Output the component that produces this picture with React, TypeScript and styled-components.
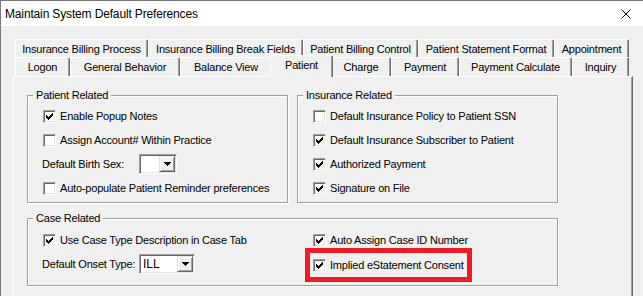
import React from "react";
import styled, { createGlobalStyle } from "styled-components";

const GlobalStyle = createGlobalStyle`
  html, body {
    margin: 0;
    padding: 0;
    background: #f0f0f0;
  }
  body {
    font-family: "Liberation Sans", Arial, sans-serif;
    color: #000;
  }
`;

const CHECK = ["......#", ".....##", "#...###", "##.###.", "#####..", ".###...", "..#...."];
const ARROW = ["#######", ".#####.", "..###..", "...#..."];

const Pixels = ({ rows }: { rows: string[] }) => (
  <svg width={rows[0].length} height={rows.length} shapeRendering="crispEdges">
    {rows.flatMap((r, y) =>
      r.split("").map((c, x) =>
        c === "#" ? <rect key={`${x}-${y}`} x={x} y={y} width={1} height={1} fill="#000" /> : null
      )
    )}
  </svg>
);

const TABS_BACK = [
  { label: "Insurance Billing Process", w: 133 },
  { label: "Insurance Billing Break Fields", w: 155 },
  { label: "Patient Billing Control", w: 115 },
  { label: "Patient Statement Format", w: 136 },
  { label: "Appointment", w: 75 },
];

const TABS_FRONT = [
  { label: "Logon", w: 55 },
  { label: "General Behavior", w: 110 },
  { label: "Balance View", w: 92 },
  { label: "Patient", w: 59, active: true },
  { label: "Charge", w: 60 },
  { label: "Payment", w: 68 },
  { label: "Payment Calculate", w: 113 },
  { label: "Inquiry", w: 57 },
];

const CheckBox = ({ checked }: { checked?: boolean }) => (
  <Box>{checked && <Pixels rows={CHECK} />}</Box>
);

const Combo = ({ value, width }: { value?: string; width: number }) => (
  <ComboBox $width={width}>
    <ComboValue>{value}</ComboValue>
    <ComboButton>
      <Pixels rows={ARROW} />
    </ComboButton>
  </ComboBox>
);

const Check = ({ label, checked }: { label: string; checked?: boolean }) => (
  <Row>
    <CheckBox checked={checked} />
    <Text>{label}</Text>
  </Row>
);

export default function App() {
  return (
    <>
      <GlobalStyle />
      <Window>
        <TitleBar>
          <Title>Maintain System Default Preferences</Title>
          <Close>
            <svg width="10" height="10" viewBox="0 0 10 10">
              <path d="M0.5 0.5 L9.5 9.5 M9.5 0.5 L0.5 9.5" stroke="#000" strokeWidth="1" />
            </svg>
          </Close>
        </TitleBar>

        <Body>
          <TabStrip>
            <TabRow $height={18}>
              {TABS_BACK.map((t) => (
                <Tab key={t.label} $width={t.w}>
                  {t.label}
                </Tab>
              ))}
            </TabRow>
            <TabRow $height={19}>
              {TABS_FRONT.map((t) => (
                <Tab key={t.label} $width={t.w} $active={t.active}>
                  {t.label}
                </Tab>
              ))}
            </TabRow>
          </TabStrip>

          <Panel>
            <TopGroups>
              <Group $height={108}>
                <Caption>Patient Related</Caption>
                <List>
                  <Check label="Enable Popup Notes" checked />
                  <Check label="Assign Account# Within Practice" />
                  <Row>
                    <FieldLabel>Default Birth Sex:</FieldLabel>
                    <Combo width={38} />
                  </Row>
                  <Check label="Auto-populate Patient Reminder preferences" />
                </List>
              </Group>

              <Group $height={108}>
                <Caption>Insurance Related</Caption>
                <List>
                  <Check label="Default Insurance Policy to Patient SSN" />
                  <Check label="Default Insurance Subscriber to Patient" checked />
                  <Check label="Authorized Payment" checked />
                  <Check label="Signature on File" checked />
                </List>
              </Group>
            </TopGroups>

            <CaseGroup $height={68}>
              <Caption>Case Related</Caption>
              <CaseGrid>
                <Check label="Use Case Type Description in Case Tab" checked />
                <Check label="Auto Assign Case ID Number" checked />
                <Row>
                  <FieldLabel>Default Onset Type:</FieldLabel>
                  <Combo width={56} value="ILL" />
                </Row>
                <Highlight>
                  <CheckBox checked />
                  <Text>Implied eStatement Consent</Text>
                </Highlight>
              </CaseGrid>
            </CaseGroup>
          </Panel>
        </Body>
      </Window>
    </>
  );
}

const Window = styled.div`
  width: 643px;
  height: 296px;
  box-sizing: border-box;
  overflow: hidden;
  background: #f0f0f0;
  border-top: 1px solid #7a7a7a;
  border-left: 1px solid #7a7a7a;
  display: flex;
  flex-direction: column;
`;

const TitleBar = styled.div`
  height: 25px;
  flex: none;
  background: #fff;
  display: flex;
  align-items: center;
  padding-left: 4px;
`;

const Title = styled.span`
  font-size: 12px;
  letter-spacing: -0.15px;
`;

const Close = styled.div`
  margin-left: auto;
  width: 34px;
  height: 100%;
  display: flex;
  align-items: center;
  justify-content: center;
`;

const Body = styled.div`
  flex: 1;
  display: flex;
  flex-direction: column;
  padding: 13px 0 0 12px;
`;

const TabStrip = styled.div`
  display: flex;
  flex-direction: column;
  margin-left: 2px;
`;

const TabRow = styled.div<{ $height: number }>`
  display: flex;
  height: ${(p) => p.$height}px;
`;

const Tab = styled.div<{ $width: number; $active?: boolean }>`
  box-sizing: border-box;
  width: ${(p) => p.$width}px;
  flex: none;
  background: #f0f0f0;
  border-top: 1px solid #fff;
  border-left: 1px solid #fff;
  border-right: 1px solid #696969;
  border-radius: 2px 2px 0 0;
  box-shadow: inset -1px 0 0 #a0a0a0;
  font-size: 11px;
  letter-spacing: -0.2px;
  white-space: nowrap;
  display: flex;
  align-items: center;
  justify-content: center;
  ${(p) =>
    p.$active &&
    `
    position: relative;
    z-index: 1;
    margin: -2px -2px -1px;
    width: ${p.$width + 4}px;
    padding-bottom: 3px;
  `}
`;

const Panel = styled.div`
  box-sizing: border-box;
  width: 620px;
  flex: 1;
  border-top: 1px solid #fff;
  border-left: 1px solid #fff;
  border-right: 1px solid #696969;
  box-shadow: inset -1px 0 0 #a0a0a0;
  padding: 18px 0 0 13px;
`;

const TopGroups = styled.div`
  display: grid;
  grid-template-columns: 261px 261px;
  column-gap: 9px;
`;

const Group = styled.div<{ $height: number }>`
  box-sizing: border-box;
  height: ${(p) => p.$height}px;
  border: 1px solid #a0a0a0;
  box-shadow: inset 1px 1px 0 #fff, 1px 1px 0 #fff;
`;

const CaseGroup = styled(Group)`
  width: 531px;
  margin-top: 15px;
`;

const Caption = styled.div`
  display: table;
  margin: -7px 0 0 5px;
  padding: 0 3px;
  background: #f0f0f0;
  font-size: 11px;
  line-height: 13px;
  letter-spacing: -0.2px;
  white-space: nowrap;
`;

const List = styled.div`
  display: flex;
  flex-direction: column;
  margin-top: 2px;
  padding-left: 15px;
`;

const CaseGrid = styled.div`
  display: grid;
  grid-template-columns: 270px 1fr;
  grid-auto-rows: 24px;
  margin-top: 3px;
  padding-left: 15px;
`;

const Row = styled.div`
  display: flex;
  align-items: center;
  height: 24px;
  gap: 4px;
`;

const Highlight = styled(Row)`
  width: 157px;
  box-sizing: border-box;
  margin-left: -3px;
  padding-left: 3px;
  outline: 5px solid #ec1c24;
  margin-top: 1px;
`;

const Text = styled.span`
  font-size: 11px;
  letter-spacing: -0.2px;
  white-space: nowrap;
`;

const FieldLabel = styled(Text)`
  width: 97px;
  margin-left: -1px;
  margin-right: -4px;
`;

const Box = styled.span`
  box-sizing: border-box;
  width: 13px;
  height: 13px;
  flex: none;
  background: #fff;
  border: 1px solid;
  border-color: #a0a0a0 #fff #fff #a0a0a0;
  box-shadow: inset 1px 1px 0 #696969, inset -1px -1px 0 #e3e3e3;
  display: flex;
  align-items: center;
  justify-content: center;
`;

const ComboBox = styled.div<{ $width: number }>`
  box-sizing: border-box;
  width: ${(p) => p.$width}px;
  height: 20px;
  flex: none;
  background: #fff;
  border: 1px solid;
  border-color: #a0a0a0 #fff #fff #a0a0a0;
  box-shadow: inset 1px 1px 0 #696969, inset -1px -1px 0 #e3e3e3;
  padding: 1px;
  display: flex;
`;

const ComboValue = styled.span`
  flex: 1;
  font-size: 12px;
  line-height: 16px;
  padding-left: 2px;
`;

const ComboButton = styled.div`
  box-sizing: border-box;
  width: 16px;
  height: 16px;
  background: #f0f0f0;
  border: 1px solid;
  border-color: #e3e3e3 #696969 #696969 #e3e3e3;
  box-shadow: inset 1px 1px 0 #fff, inset -1px -1px 0 #a0a0a0;
  display: flex;
  align-items: center;
  justify-content: center;
`;
